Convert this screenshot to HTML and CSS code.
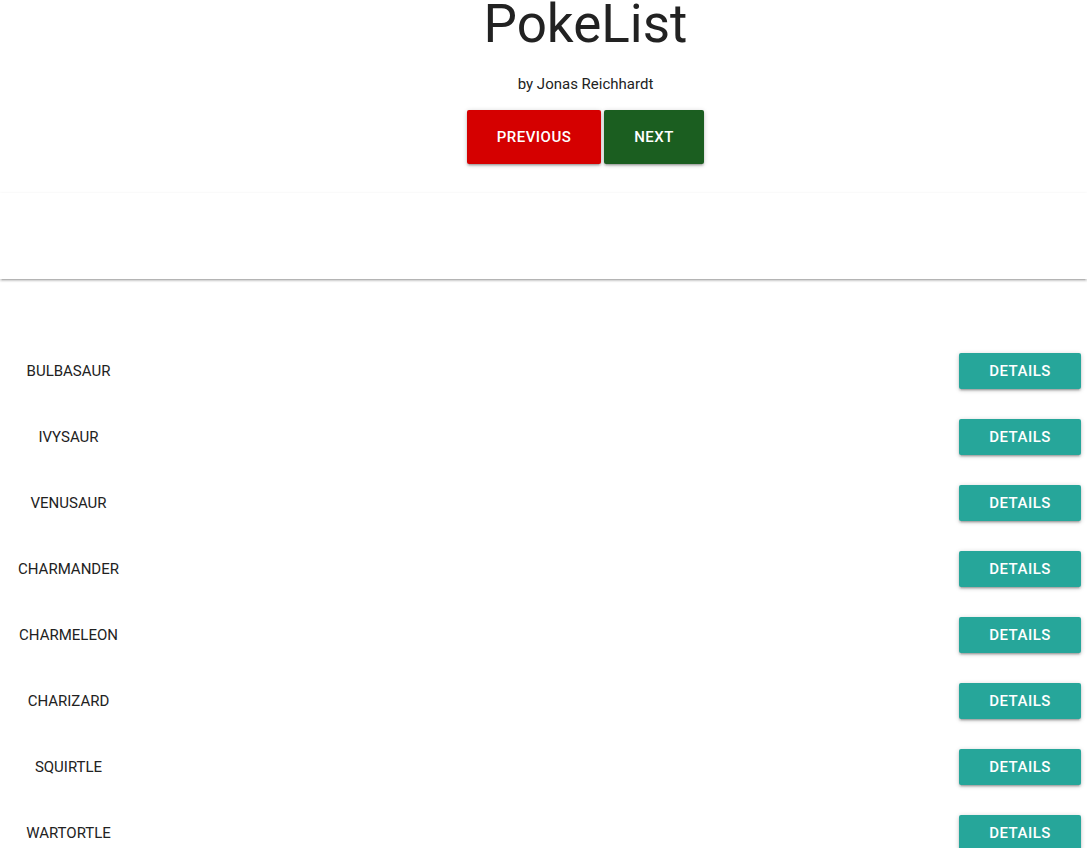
FILE: index.html
```html
<!DOCTYPE html>
<html lang="en">
<head>
<meta charset="utf-8">
<title>PokeList</title>
<link rel="stylesheet" href="styles.css">
</head>
<body>
<header class="header">
  <h1 class="title">PokeList</h1>
  <p class="byline">by Jonas Reichhardt</p>
  <div class="pager">
    <button class="btn btn-prev">Previous</button>
    <button class="btn btn-next">Next</button>
  </div>
</header>
<nav class="bar"></nav>
<ul class="list">
  <li class="row"><span class="name">Bulbasaur</span><button class="btn btn-details">Details</button></li>
  <li class="row"><span class="name">Ivysaur</span><button class="btn btn-details">Details</button></li>
  <li class="row"><span class="name">Venusaur</span><button class="btn btn-details">Details</button></li>
  <li class="row"><span class="name">Charmander</span><button class="btn btn-details">Details</button></li>
  <li class="row"><span class="name">Charmeleon</span><button class="btn btn-details">Details</button></li>
  <li class="row"><span class="name">Charizard</span><button class="btn btn-details">Details</button></li>
  <li class="row"><span class="name">Squirtle</span><button class="btn btn-details">Details</button></li>
  <li class="row"><span class="name">Wartortle</span><button class="btn btn-details">Details</button></li>
  <li class="row"><span class="name">Blastoise</span><button class="btn btn-details">Details</button></li>
</ul>
</body>
</html>
```
FILE: styles.css
```css
html, body {
  margin: 0;
  padding: 0;
  background: #fff;
  font-family: Roboto, "Liberation Sans", sans-serif;
  color: rgba(0,0,0,0.87);
}
.header {
  display: flex;
  flex-direction: column;
  align-items: center;
  padding-left: 84px;
}
.title {
  margin: 0;
  font-size: 53px;
  line-height: 48px;
  font-weight: 400;
  color: #222;
}
.byline {
  margin: 26px 0 0;
  font-size: 15px;
  line-height: 20px;
  color: #222;
}
.pager {
  display: flex;
  gap: 3px;
  margin-top: 16px;
}
.btn {
  border: none;
  border-radius: 2px;
  color: #fff;
  font-family: Roboto, "Liberation Sans", sans-serif;
  font-weight: 500;
  font-size: 15px;
  text-transform: uppercase;
  letter-spacing: 0.5px;
  cursor: pointer;
  box-shadow: 0 2px 2px 0 rgba(0,0,0,0.14), 0 3px 1px -2px rgba(0,0,0,0.12), 0 1px 5px 0 rgba(0,0,0,0.2);
}
.btn-prev {
  background: #d50000;
  height: 54px;
  width: 134px;
}
.btn-next {
  background: #1b5e20;
  height: 54px;
  width: 100px;
}
.bar {
  margin-top: 29px;
  height: 86px;
  background: #fff;
  box-shadow: 0 2px 2px 0 rgba(0,0,0,0.14), 0 3px 1px -2px rgba(0,0,0,0.12), 0 1px 3px 0 rgba(0,0,0,0.12);
}
.list {
  list-style: none;
  margin: 59px 0 0;
  padding: 0 6px 0 0;
}
.row {
  display: flex;
  align-items: center;
  justify-content: space-between;
  height: 66px;
}
.name {
  width: 137px;
  text-align: center;
  text-transform: uppercase;
  font-size: 15px;
  color: #222;
}
.btn-details {
  background: #26a69a;
  width: 122px;
  height: 36px;
}
```
